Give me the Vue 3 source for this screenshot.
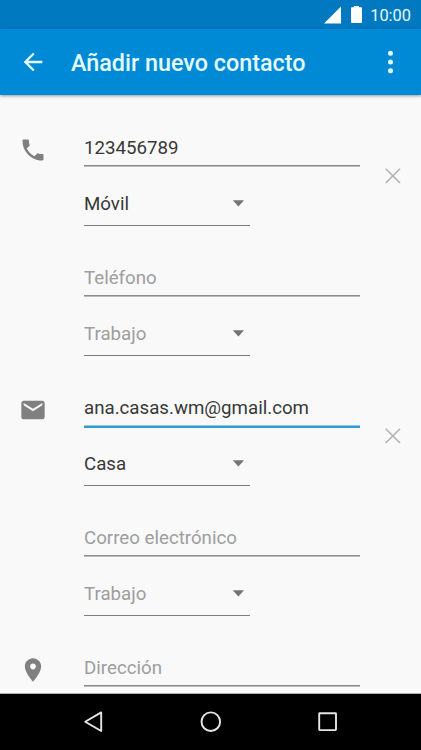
<script setup>
const sections = [
  {
    icon: 'phone',
    removable: true,
    entries: [
      { value: '123456789', type: 'Móvil', filled: true },
      { value: 'Teléfono', type: 'Trabajo' },
    ],
  },
  {
    icon: 'mail',
    removable: true,
    entries: [
      { value: 'ana.casas.wm@gmail.com', type: 'Casa', filled: true, focused: true },
      { value: 'Correo electrónico', type: 'Trabajo' },
    ],
  },
  { icon: 'place', entries: [{ value: 'Dirección' }] },
]

const icons = {
  phone:
    'M6.62 10.79c1.44 2.83 3.76 5.14 6.59 6.59l2.2-2.2c.27-.27.67-.36 1.02-.24 1.12.37 2.33.57 3.57.57.55 0 1 .45 1 1V20c0 .55-.45 1-1 1-9.39 0-17-7.61-17-17 0-.55.45-1 1-1h3.5c.55 0 1 .45 1 1 0 1.25.2 2.45.57 3.57.11.35.03.74-.25 1.02l-2.2 2.2z',
  mail: 'M20 4H4c-1.1 0-1.99.9-1.99 2L2 18c0 1.1.9 2 2 2h16c1.1 0 2-.9 2-2V6c0-1.1-.9-2-2-2zm0 4l-8 5-8-5V6l8 5 8-5v2z',
  place:
    'M12 2C8.13 2 5 5.13 5 9c0 5.25 7 13 7 13s7-7.75 7-13c0-3.87-3.13-7-7-7zm0 9.5c-1.38 0-2.5-1.12-2.5-2.5s1.12-2.5 2.5-2.5 2.5 1.12 2.5 2.5-1.12 2.5-2.5 2.5z',
}
</script>

<template>
  <div class="screen">
    <div class="status">
      <svg class="signal" width="18" height="18" viewBox="0 0 18 18"><path d="M17 0.5V17.5H0z" fill="#fff" /></svg>
      <svg class="battery" width="11" height="17" viewBox="0 0 11 17">
        <path d="M3 0H8V1.2H10.2Q11 1.2 11 2V16Q11 17 10 17H1Q0 17 0 16V2Q0 1.2 .8 1.2H3z" fill="#fff" />
      </svg>
      <span class="clock">10:00</span>
    </div>

    <header class="bar">
      <svg class="back" width="28" height="28" viewBox="0 0 24 24">
        <path d="M20 11H7.83l5.59-5.59L12 4l-8 8 8 8 1.41-1.41L7.83 13H20v-2z" fill="#e4fbff" />
      </svg>
      <h1>Añadir nuevo contacto</h1>
      <svg class="more" width="6" height="24" viewBox="0 0 6 24">
        <g fill="#e4fbff"><circle cx="2.5" cy="3.2" r="2.5" /><circle cx="2.5" cy="12" r="2.5" /><circle cx="2.5" cy="20.8" r="2.5" /></g>
      </svg>
    </header>

    <main class="form">
      <section v-for="s in sections" :key="s.icon" class="section">
        <svg class="kind" width="28" height="28" viewBox="0 0 24 24"><path :d="icons[s.icon]" fill="#808080" /></svg>
        <div class="entries">
          <div v-for="e in s.entries" :key="e.value" class="entry" :class="{ filled: e.filled }">
            <div class="field" :class="{ focused: e.focused }">{{ e.value }}</div>
            <div v-if="e.type" class="select">
              <span>{{ e.type }}</span>
              <svg width="12" height="7" viewBox="0 0 12 7"><path d="M.8 .2H12L6.4 6.5z" fill="#747474" /></svg>
            </div>
          </div>
        </div>
        <svg v-if="s.removable" class="remove" width="16" height="16" viewBox="0 0 16 16">
          <path d="M.7 .7L15 15M15 .7L.7 15" stroke="#b2b2b2" stroke-width="1.6" />
        </svg>
      </section>
    </main>

    <nav class="nav">
      <svg width="24" height="24" viewBox="0 0 24 24"><path d="M3.2 11.7L19.2 2.4V21z" /></svg>
      <svg width="24" height="24" viewBox="0 0 24 24"><circle cx="11.8" cy="11.7" r="9.3" /></svg>
      <svg width="24" height="24" viewBox="0 0 24 24"><rect x="3.2" y="3.3" width="16.8" height="16.8" rx=".5" /></svg>
    </nav>
  </div>
</template>

<style>
body {
  margin: 0;
}
</style>

<style scoped>
.screen {
  display: flex;
  flex-direction: column;
  width: 421px;
  height: 750px;
  overflow: hidden;
  background: #f9f9f9;
  font-family: Roboto, sans-serif;
}
.screen svg {
  display: block;
  flex: none;
}
.status {
  display: flex;
  flex: none;
  justify-content: flex-end;
  height: 29px;
  padding-right: 10px;
  box-sizing: border-box;
  background: #0079c1;
  color: #e4fbff;
}
.signal {
  margin-top: 6px;
}
.battery {
  margin: 6px 8px 0 9px;
}
.clock {
  font-size: 16.4px;
  line-height: 31px;
}
.bar {
  display: flex;
  flex: none;
  align-items: center;
  height: 66px;
  padding: 0 27.5px 0 19px;
  box-sizing: border-box;
  background: #008ad5;
  box-shadow: 0 1px 3px rgba(0, 0, 0, 0.4);
  z-index: 1;
}
h1 {
  flex: 1;
  margin: 2px 0 0 24px;
  color: #e4fbff;
  font-size: 23.35px;
  font-weight: 500;
  line-height: 28px;
  white-space: nowrap;
}
.form {
  flex: 1;
  min-height: 0;
  overflow: hidden;
  padding-top: 1px;
  border-bottom: 1px solid #b0b0b0;
  box-sizing: border-box;
}
.section {
  display: flex;
  align-items: flex-start;
}
.kind {
  margin: 40px 37px 0 19px;
}
.entries {
  width: 276px;
}
.entry {
  padding-top: 30px;
  color: #9e9e9e;
  font-size: 18.7px;
}
.entry.filled {
  color: #383838;
}
.field {
  height: 41px;
  box-sizing: border-box;
  border-bottom: 1px solid #bcbcbc;
  box-shadow: inset 0 -1px #8c8c8c;
  line-height: 45px;
}
.field.focused {
  height: 42px;
  margin-bottom: -1px;
  border-bottom: 0;
  box-shadow: inset 0 -2.5px #2e9bd1;
}
.select {
  display: flex;
  align-items: center;
  justify-content: space-between;
  width: 166px;
  height: 59px;
  padding: 15px 6px 0 0;
  box-sizing: border-box;
  border-bottom: 1px solid #7c7c7c;
}
.remove {
  margin: 72px 0 0 25px;
}
.nav {
  display: flex;
  flex: none;
  align-items: center;
  justify-content: center;
  gap: 93px;
  height: 56px;
  background: #000;
}
.nav svg {
  fill: none;
  stroke: #e6e6e6;
  stroke-width: 1.9;
  stroke-linejoin: round;
}
</style>
